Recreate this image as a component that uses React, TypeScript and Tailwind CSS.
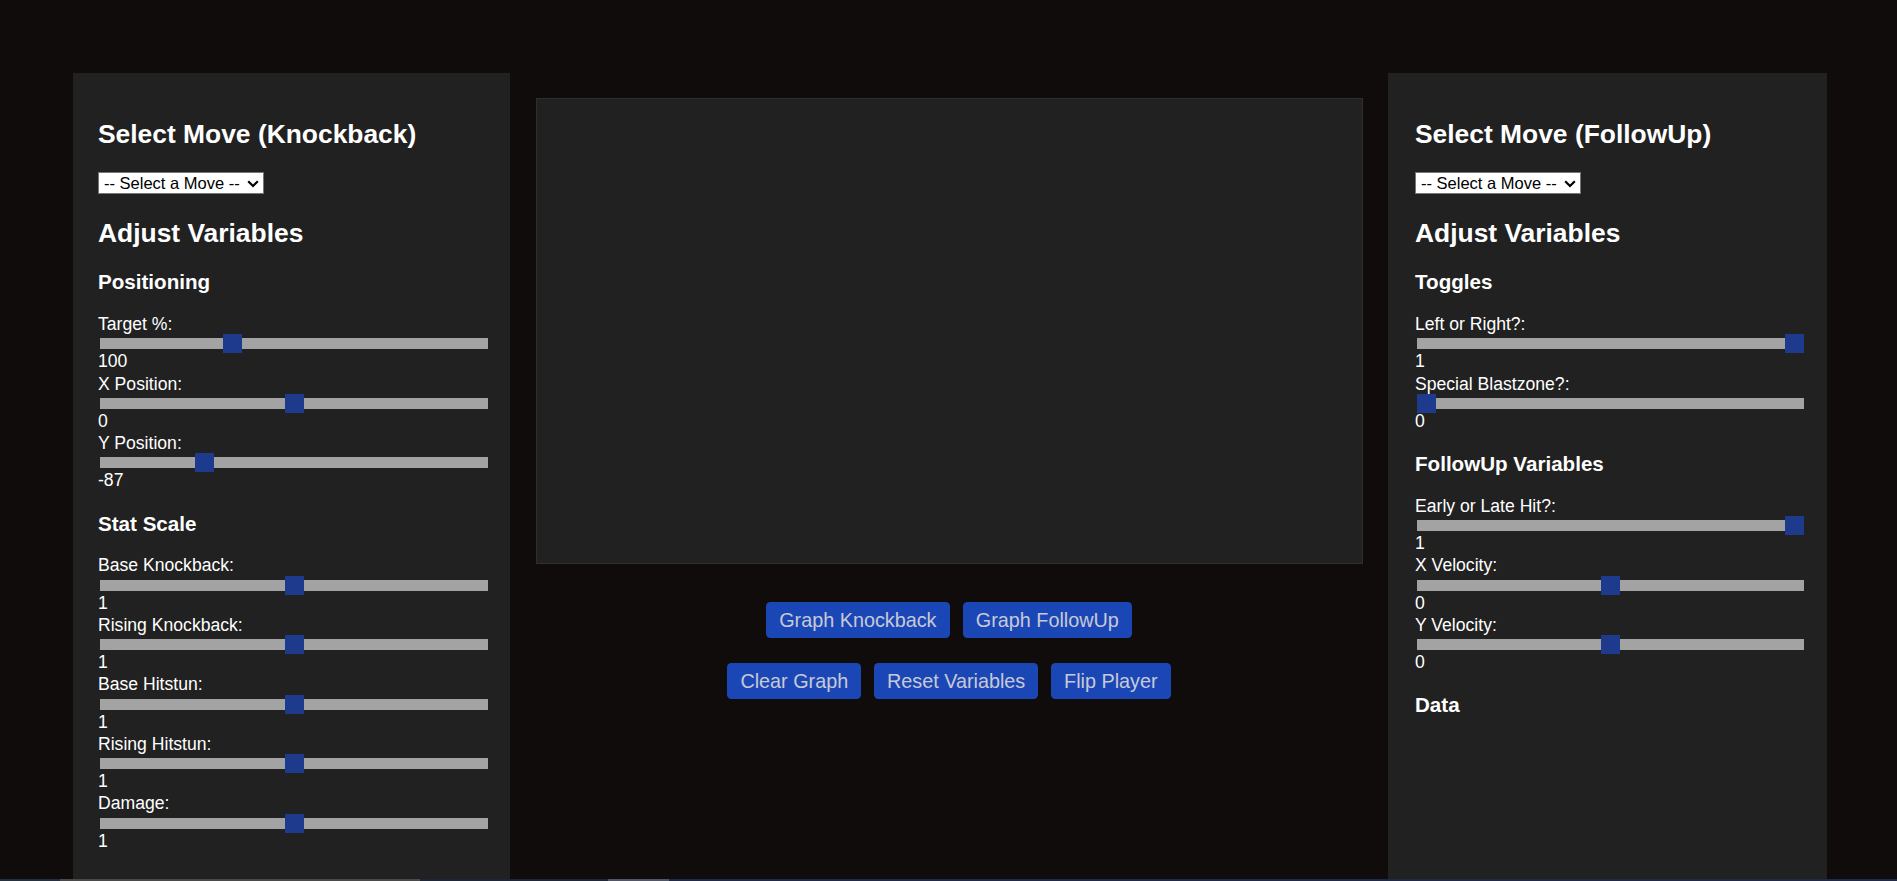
import { useState } from "react";

type SliderDef = {
  label: string;
  min: number;
  max: number;
  value: number;
};

const font = { fontFamily: '"Liberation Sans", Arial, sans-serif' };

function Slider({ def }: { def: SliderDef }) {
  const [v, setV] = useState(def.value);
  return (
    <div className="flex flex-col">
      <div className="h-[20px] text-[17.6px] leading-[20px] text-white">{def.label}</div>
      <input
        type="range"
        min={def.min}
        max={def.max}
        value={v}
        onChange={(e) => setV(Number(e.target.value))}
        className="block mx-[2px] mt-[4.4px] mb-[1.9px] h-[11px] appearance-none bg-[#a3a3a3] outline-none cursor-pointer [&::-webkit-slider-thumb]:appearance-none [&::-webkit-slider-thumb]:w-[19px] [&::-webkit-slider-thumb]:h-[19px] [&::-webkit-slider-thumb]:bg-[#1d3a8c] [&::-webkit-slider-thumb]:border-0"
      />
      <div className="h-[20px] text-[17.6px] leading-[20px] text-white">{v}</div>
    </div>
  );
}

function Group({ title, sliders, first }: { title: string; sliders: SliderDef[]; first?: boolean }) {
  return (
    <>
      <h3
        className={`${first ? "mt-[22.5px]" : "mt-[21.3px]"} text-[20.6px] leading-[24px] font-bold text-white`}
      >
        {title}
      </h3>
      {sliders.length > 0 && (
        <div className="mt-[19.8px] flex flex-col gap-[2.2px]">
          {sliders.map((s) => (
            <Slider key={s.label} def={s} />
          ))}
        </div>
      )}
    </>
  );
}

function MoveSelect() {
  return (
    <div className="relative mt-[23.3px] w-[166px] h-[22px]">
      <select className="block w-[166px] h-[22px] appearance-none bg-white border border-[#767676] pl-[5px] pr-[20px] py-0 text-[16.5px] leading-[18px] text-black rounded-none outline-none">
        <option>-- Select a Move --</option>
        <option>Jab</option>
        <option>Forward Tilt</option>
        <option>Up Smash</option>
      </select>
      <svg
        className="pointer-events-none absolute right-[5px] top-[8px]"
        width="12"
        height="8"
        viewBox="0 0 12 8"
      >
        <path d="M1.2 1.2 L6 6 L10.8 1.2" fill="none" stroke="#000" strokeWidth="2.2" />
      </svg>
    </div>
  );
}

function Panel({
  title,
  children,
  className,
}: {
  title: string;
  children: React.ReactNode;
  className: string;
}) {
  return (
    <div className={`bg-[#212121] pt-[46px] pb-[60px] ${className}`}>
      <h2 className="text-[26.4px] leading-[30px] font-bold text-white">{title}</h2>
      <MoveSelect />
      <h2 className="mt-[23.5px] text-[26.4px] leading-[30px] font-bold text-white">Adjust Variables</h2>
      {children}
    </div>
  );
}

function Btn({ children }: { children: React.ReactNode }) {
  return (
    <button className="bg-[#1b47b6] text-[#c7cad6] text-[19.8px] leading-[22.8px] px-[13.2px] py-[6.6px] rounded-[4.4px] cursor-pointer">
      {children}
    </button>
  );
}

export default function App() {
  return (
    <div className="h-[881px] bg-[#100c0c] flex flex-col overflow-hidden" style={font}>
      <div className="flex-1 min-h-0 overflow-hidden">
        <div className="flex items-stretch pt-[73px] pl-[73px]">
          <Panel title="Select Move (Knockback)" className="w-[437px] pl-[25px] pr-[20px]">
            <Group
              first
              title="Positioning"
              sliders={[
                { label: "Target %:", min: 0, max: 300, value: 100 },
                { label: "X Position:", min: -200, max: 200, value: 0 },
                { label: "Y Position:", min: -180, max: 180, value: -87 },
              ]}
            />
            <Group
              title="Stat Scale"
              sliders={[
                { label: "Base Knockback:", min: 0, max: 2, value: 1 },
                { label: "Rising Knockback:", min: 0, max: 2, value: 1 },
                { label: "Base Hitstun:", min: 0, max: 2, value: 1 },
                { label: "Rising Hitstun:", min: 0, max: 2, value: 1 },
                { label: "Damage:", min: 0, max: 2, value: 1 },
              ]}
            />
          </Panel>

          <div className="w-[878px] pt-[25px] flex flex-col items-center">
            <canvas className="block w-[827px] h-[466px] bg-[#212121] border border-[#2f2f2f]" />
            <div className="mt-[38px] flex gap-[13px]">
              <Btn>Graph Knockback</Btn>
              <Btn>Graph FollowUp</Btn>
            </div>
            <div className="mt-[25px] flex gap-[12.5px]">
              <Btn>Clear Graph</Btn>
              <Btn>Reset Variables</Btn>
              <Btn>Flip Player</Btn>
            </div>
          </div>

          <Panel title="Select Move (FollowUp)" className="w-[439px] pl-[27px] pr-[21px]">
            <Group
              first
              title="Toggles"
              sliders={[
                { label: "Left or Right?:", min: 0, max: 1, value: 1 },
                { label: "Special Blastzone?:", min: 0, max: 1, value: 0 },
              ]}
            />
            <Group
              title="FollowUp Variables"
              sliders={[
                { label: "Early or Late Hit?:", min: 0, max: 1, value: 1 },
                { label: "X Velocity:", min: -10, max: 10, value: 0 },
                { label: "Y Velocity:", min: -10, max: 10, value: 0 },
              ]}
            />
            <Group title="Data" sliders={[]} />
          </Panel>
        </div>
      </div>
      <div className="flex h-[2px] shrink-0">
        <div className="w-[60px] bg-[#243040]" />
        <div className="w-[360px] bg-[#4a4a4a]" />
        <div className="w-[188px] bg-[#1d2739]" />
        <div className="w-[61px] bg-[#4f5767]" />
        <div className="flex-1 bg-[#1e2a48]" />
      </div>
    </div>
  );
}
